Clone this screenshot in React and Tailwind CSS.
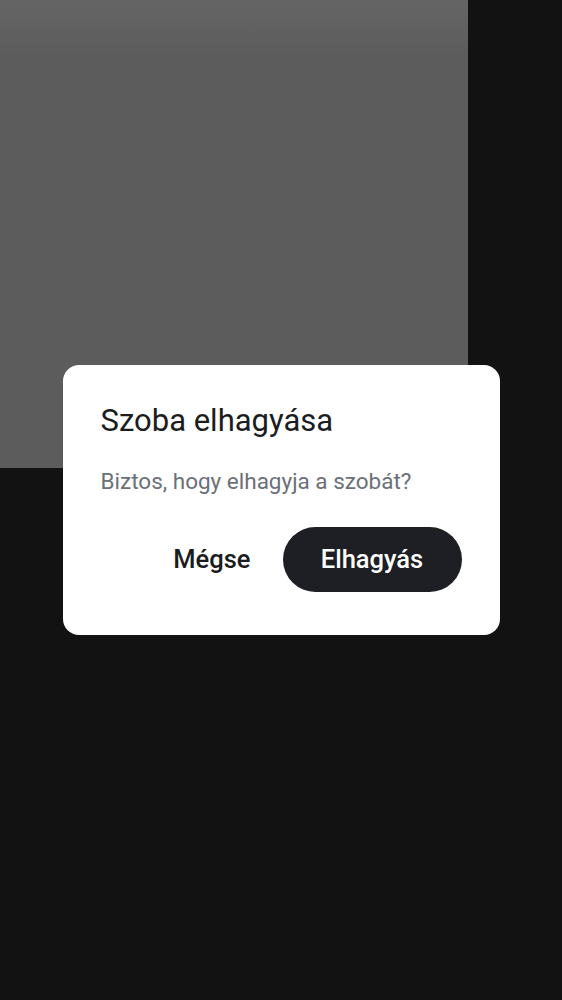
export default function App() {
  return (
    <div className="relative w-[562px] h-[1000px] bg-[#121212] overflow-hidden" style={{ fontFamily: 'Roboto, "Noto Sans", sans-serif' }}>
      <div className="w-[468px] h-[468px] bg-[linear-gradient(to_bottom,#656565_0%,#5c5c5c_12%,#5c5c5c_100%)]" />
      <div className="absolute inset-0 flex items-start justify-center pt-[365px]">
        <div className="w-[437px] h-[270px] bg-white rounded-[16px] pl-[38px] pr-[38px] pt-[36px] flex flex-col">
          <h2 className="text-[31px] leading-[40px] text-[#1b1c20] font-normal">Szoba elhagyása</h2>
          <p className="mt-[25px] text-[22.5px] leading-[30px] text-[#6b7079]">Biztos, hogy elhagyja a szobát?</p>
          <div className="mt-[31px] flex justify-end items-center gap-[10px]">
            <button className="h-[65px] px-[22px] text-[25.5px] font-medium text-[#1b1c20]">Mégse</button>
            <button className="h-[65px] w-[179px] rounded-full bg-[#1d1f24] text-white text-[25.5px] font-medium">Elhagyás</button>
          </div>
        </div>
      </div>
    </div>
  );
}
